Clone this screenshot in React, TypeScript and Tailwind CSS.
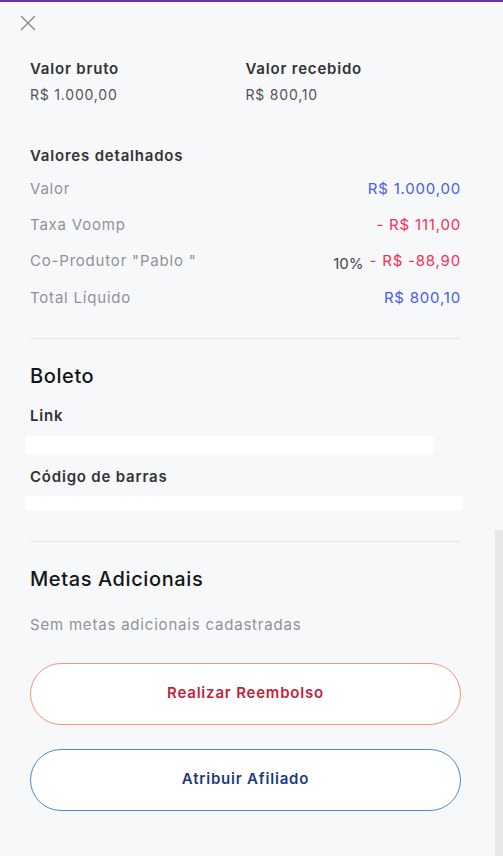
import { X } from "lucide-react";

const rows = [
  { label: "Valor", value: "R$ 1.000,00", tone: "text-[#4a5de6]" },
  { label: "Taxa Voomp", value: "- R$ 111,00", tone: "text-[#fb2d55]" },
  { label: 'Co-Produtor "Pablo "', value: "- R$ -88,90", tone: "text-[#fb2d55]", pct: "10%" },
  { label: "Total Líquido", value: "R$ 800,10", tone: "text-[#4a5de6]" },
];

export default function App() {
  return (
    <div className="flex h-[856px] w-[503px] overflow-hidden border-t-2 border-[#6d2fb5] bg-[#f7f8fa] font-['Inter',sans-serif] tracking-[0.05em]">
      <div className="flex w-[495px] flex-col pl-[30px] pr-[34px]">
        <button className="-ml-[15px] mt-[8px] flex h-[26px] w-[26px] items-center justify-center text-[#8a8a8a]">
          <X size={26} strokeWidth={1.3} />
        </button>

        <div className="mt-[23px] grid grid-cols-2">
          <div>
            <p className="text-[15px] font-semibold leading-[20px] text-[#333]">Valor bruto</p>
            <p className="mt-[7px] text-[14px] leading-[18px] text-[#555]">R$ 1.000,00</p>
          </div>
          <div>
            <p className="text-[15px] font-semibold leading-[20px] text-[#333]">Valor recebido</p>
            <p className="mt-[7px] text-[14px] leading-[18px] text-[#555]">R$ 800,10</p>
          </div>
        </div>

        <p className="mt-[42px] text-[15px] font-semibold leading-[20px] text-[#333]">Valores detalhados</p>
        <div className="mt-[13px] flex flex-col gap-[16.2px]">
          {rows.map((r) => (
            <div key={r.label} className="flex items-center justify-between text-[15px] leading-[20px]">
              <span className="text-[#929296]">{r.label}</span>
              <span className="flex items-end gap-[6px]">
                {r.pct && <span className="translate-y-[3px] tracking-normal text-[#444]">{r.pct}</span>}
                <span className={r.tone}>{r.value}</span>
              </span>
            </div>
          ))}
        </div>

        <div className="mt-[30px] h-px bg-[#e8e9ec]" />

        <h2 className="mt-[24px] text-[20px] font-medium leading-[26px] tracking-[0.03em] text-[#151515]">Boleto</h2>
        <p className="mt-[17px] text-[15px] font-semibold leading-[20px] text-[#333]">Link</p>
        <div className="-ml-[5px] mt-[10px] h-[18px] w-[409px] rounded-[3px] bg-white" />
        <p className="mt-[13px] text-[15px] font-semibold leading-[20px] text-[#333]">Código de barras</p>
        <div className="-ml-[5px] mt-[9px] h-[15px] w-[438px] rounded-[3px] bg-white" />

        <div className="mt-[30px] h-px bg-[#e8e9ec]" />

        <h2 className="mt-[24px] text-[20px] font-medium leading-[26px] tracking-[0.03em] text-[#151515]">Metas Adicionais</h2>
        <p className="mt-[23px] text-[15px] leading-[20px] text-[#929296]">Sem metas adicionais cadastradas</p>

        <button className="mt-[28px] h-[62px] w-full rounded-full border border-[#f5947e] bg-white text-[15px] font-semibold text-[#c51f3a]">
          Realizar Reembolso
        </button>
        <button className="mt-[24px] h-[62px] w-full rounded-full border border-[#4d88d6] bg-white text-[15px] font-semibold text-[#1c3a7c]">
          Atribuir Afiliado
        </button>
      </div>
      <div className="flex w-[8px] flex-col">
        <div className="h-[528px]" />
        <div className="flex-1 bg-[#e7e7e7]" />
      </div>
    </div>
  );
}
